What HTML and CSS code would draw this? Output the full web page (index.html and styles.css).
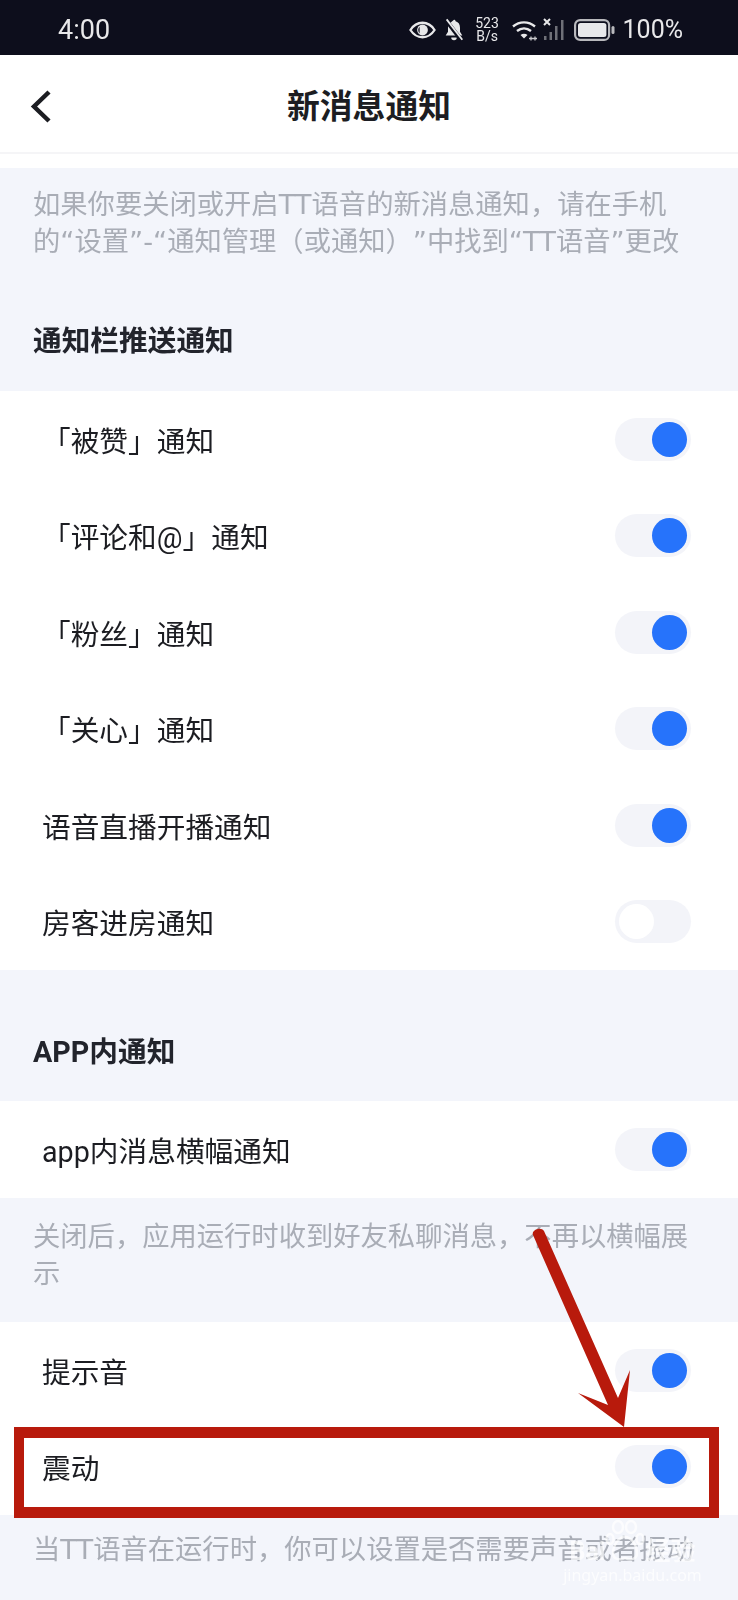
FILE: index.html
```html
<!doctype html>
<html lang="zh">
<head>
<meta charset="utf-8">
<title>新消息通知</title>
<link rel="stylesheet" href="styles.css">
</head>
<body>
<div class="page">
<div class="screen">

  <!-- status bar -->
  <div class="status">
    <span class="time">4:00</span>
    <div class="status-right">
      <svg class="ic-eye" width="27" height="18" viewBox="0 0 28 18"><path d="M1.500 9C5 3.500 9 1.500 14 1.500S23 3.500 26.500 9C23 14.500 19 16.500 14 16.500S5 14.500 1.500 9Z" fill="none" stroke="#e8e8ea" stroke-width="2.400"/><circle cx="14" cy="9" r="5.600" fill="#e8e8ea"/><path d="M11 5.500a5 5 0 0 0 0 7z" fill="#0d0e1c"/></svg>
      <svg class="ic-bell" width="22" height="24" viewBox="0 0 22 26"><path d="M11 2c1 0 1.600.6 1.700 1.600 3.300.9 4.800 3.400 4.800 7v4.200l2.500 4.200H2l2.500-4.200v-4.200c0-1.600.3-3 1-4.100z" fill="#e8e8ea"/><path d="M8 21h6a3 3 0 0 1-6 0z" fill="#e8e8ea"/><path d="M2 2l17 22" stroke="#0d0e1c" stroke-width="4.500"/><path d="M3 1.500l17 22" stroke="#e8e8ea" stroke-width="2"/></svg>
      <div class="speed"><span>523</span><span>B/s</span></div>
      <svg class="ic-wifi" width="26" height="22" viewBox="0 0 26 22"><path d="M1 7.500C7.500 2 16.500 2 23 7.500" fill="none" stroke="#e8e8ea" stroke-width="2.400"/><path d="M5 12c4.200-3.400 9.800-3.400 14 0" fill="none" stroke="#e8e8ea" stroke-width="2.400"/><path d="M8.500 16c2-1.600 5-1.600 7 0l-3.500 3.500z" fill="#e8e8ea"/><path d="M17 19.500h8M19 17.500v4M23 17.500v4" stroke="#c9c9cc" stroke-width="1.300"/></svg>
      <svg class="ic-signal" width="22" height="23" viewBox="0 0 22 23"><path d="M1 1l6 6M7 1L1 7" stroke="#e8e8ea" stroke-width="2"/><g fill="#6f7078"><rect x="1" y="18" width="2.500" height="4"/><rect x="6.500" y="14" width="2.500" height="8"/><rect x="12" y="8" width="2.500" height="14"/><rect x="18" y="2" width="2.500" height="20"/></g></svg>
      <svg class="ic-batt" width="41" height="22" viewBox="0 0 41 22"><rect x="1.100" y="1.100" width="34" height="19.800" rx="5" fill="none" stroke="#b9b9bd" stroke-width="2.200"/><rect x="4" y="4" width="28.400" height="14" rx="2.500" fill="#e8e8ea"/><rect x="37.500" y="7" width="3" height="8" rx="1.500" fill="#b9b9bd"/></svg>
      <span class="pct">100%</span>
    </div>
  </div>

  <!-- title bar -->
  <header class="nav">
    <svg class="back" width="26" height="39" viewBox="0 0 26 39"><path d="M21 5L6 19.500L21 34" fill="none" stroke="#1c1d22" stroke-width="4.500"/></svg>
    <h1>新消息通知</h1>
  </header>
  <div class="nav-gap"></div>

  <p class="note note-top">如果你要关闭或开启TT语音的新消息通知，请在手机的“设置”-“通知管理（或通知）”中找到“TT语音”更改</p>

  <h2 class="sec">通知栏推送通知</h2>
  <div class="group">
    <div class="row"><span>「被赞」通知</span><i class="sw on"></i></div>
    <div class="row"><span>「评论和@」通知</span><i class="sw on"></i></div>
    <div class="row"><span>「粉丝」通知</span><i class="sw on"></i></div>
    <div class="row"><span>「关心」通知</span><i class="sw on"></i></div>
    <div class="row"><span>语音直播开播通知</span><i class="sw on"></i></div>
    <div class="row"><span>房客进房通知</span><i class="sw"></i></div>
  </div>

  <h2 class="sec sec-app">APP内通知</h2>
  <div class="group">
    <div class="row"><span>app内消息横幅通知</span><i class="sw on"></i></div>
  </div>
  <p class="note note-app">关闭后，应用运行时收到好友私聊消息，不再以横幅展示</p>

  <div class="group">
    <div class="row"><span>提示音</span><i class="sw on"></i></div>
    <div class="row"><span>震动</span><i class="sw on"></i></div>
  </div>
  <p class="note note-last">当TT语音在运行时，你可以设置是否需要声音或者振动</p>
</div>

  <!-- red annotation over the screenshot -->
  <div class="mark"></div>
  <svg class="arrow" width="738" height="1600" viewBox="0 0 738 1600"><path d="M533 1235C531 1230 541 1226 544 1231L618 1398L630 1370L624 1427L578 1393L608 1405Z" fill="#b81a0c"/></svg>

  <!-- watermark -->
  <div class="wm">
    <div class="wm-logo">
      <span>Bai</span>
      <svg width="40" height="42" viewBox="0 0 40 42"><g fill="#f3f5fb" stroke="#fff" stroke-width="2.500"><ellipse cx="13" cy="7" rx="5" ry="6"/><ellipse cx="26" cy="7" rx="5" ry="6"/><ellipse cx="5" cy="19" rx="3.500" ry="5"/><ellipse cx="35" cy="19" rx="3.500" ry="5"/><path d="M20 17c7 0 12 9 12 16 0 7-7 7-12 5-5 2-12 2-12-5 0-7 5-16 12-16z" fill="none"/></g></svg>
      <span>经验</span>
    </div>
    <span class="wm-site">jingyan.baidu.com</span>
  </div>
</div>
</body>
</html>
```

FILE: styles.css
```css
*{box-sizing:border-box;margin:0;padding:0}
html,body{height:1600px;overflow:hidden;background:#f3f5fb}
body{font-family:Roboto,"Noto Sans CJK SC",sans-serif;color:#1c1d22}
.page{position:relative;width:738px;height:1600px;overflow:hidden}
.screen{filter:blur(.5px)}

/* status bar */
.status{
  height:55px;
  background:#0d0e1c;
  color:#e8e8ea;
  display:flex;
  align-items:center;
  justify-content:space-between;
  padding:4px 55px 0 58px;
}
.time{font-size:27px}
.status-right{display:flex;align-items:center}
.ic-eye{margin-right:7px}
.ic-bell{margin-right:10px}
.speed{
  width:25px;margin-right:12px;
  display:flex;flex-direction:column;align-items:center;
  font-size:14px;line-height:13px;
}
.ic-wifi{margin-right:5px}
.ic-signal{margin-right:9px}
.ic-batt{margin-right:8px}
.pct{font-size:25px}

/* title bar */
.nav{
  height:99px;
  background:#fff;
  border-bottom:2px solid #f5f5f7;
  display:flex;
  align-items:center;
  justify-content:center;
  position:relative;
}
.back{position:absolute;left:28px;top:32px}
.nav h1{font-size:32.800px;font-weight:700;line-height:1;padding-top:8px}
.nav-gap{height:14px;background:#fff}

/* DejaVu first: its curly quotes have the width the notes need */
.note{
  font-family:"DejaVu Sans","Noto Sans CJK SC",sans-serif;
  font-size:27.300px;line-height:37px;
  color:#a9adb6;
  padding:0 33px;
  text-spacing-trim:space-all;
}
.note-top{padding:18px 53px 0 33px;height:95px}
.note-app{height:124.500px;padding-top:20px}
.note-last{padding-top:16px;white-space:nowrap}

.sec{font-size:28.700px;font-weight:700;line-height:40px;padding:58px 33px 0;height:128px;color:#22242c}
.sec-app{height:131px;padding-top:62px}

.group{background:#fff}
.row{
  height:96.500px;
  display:flex;
  align-items:center;
  justify-content:space-between;
  padding:0 47px 0 42px;
  font-size:28.700px;
}

/* switches */
.sw{
  display:block;
  width:76px;height:43px;
  border-radius:22px;
  background:#f3f4f9;
  position:relative;
}
.sw::after{
  content:"";
  position:absolute;
  top:4px;left:4px;
  width:35px;height:35px;
  border-radius:50%;
  background:#fff;
}
.sw.on::after{left:37px;background:#2673fb}

/* annotation */
.mark{
  position:absolute;
  left:14px;top:1427px;
  width:705px;height:91px;
  border:solid #b81a0c;
  border-width:11px 10px;
}
.arrow{position:absolute;left:0;top:0}

/* baidu watermark */
.wm{
  position:absolute;
  left:565px;top:1520px;
  width:135px;
  display:flex;
  flex-direction:column;
  align-items:center;
  color:#fff;
  filter:blur(.6px);
}
.wm-logo{
  display:flex;align-items:flex-end;
  height:48px;
  font-size:25px;line-height:32px;font-weight:700;
  opacity:.7;
  white-space:nowrap;
}
.wm-logo svg{align-self:flex-start}
.wm-site{font-size:16px;line-height:20px;margin-top:-3px;opacity:.75;font-family:"Noto Sans",sans-serif}
```
